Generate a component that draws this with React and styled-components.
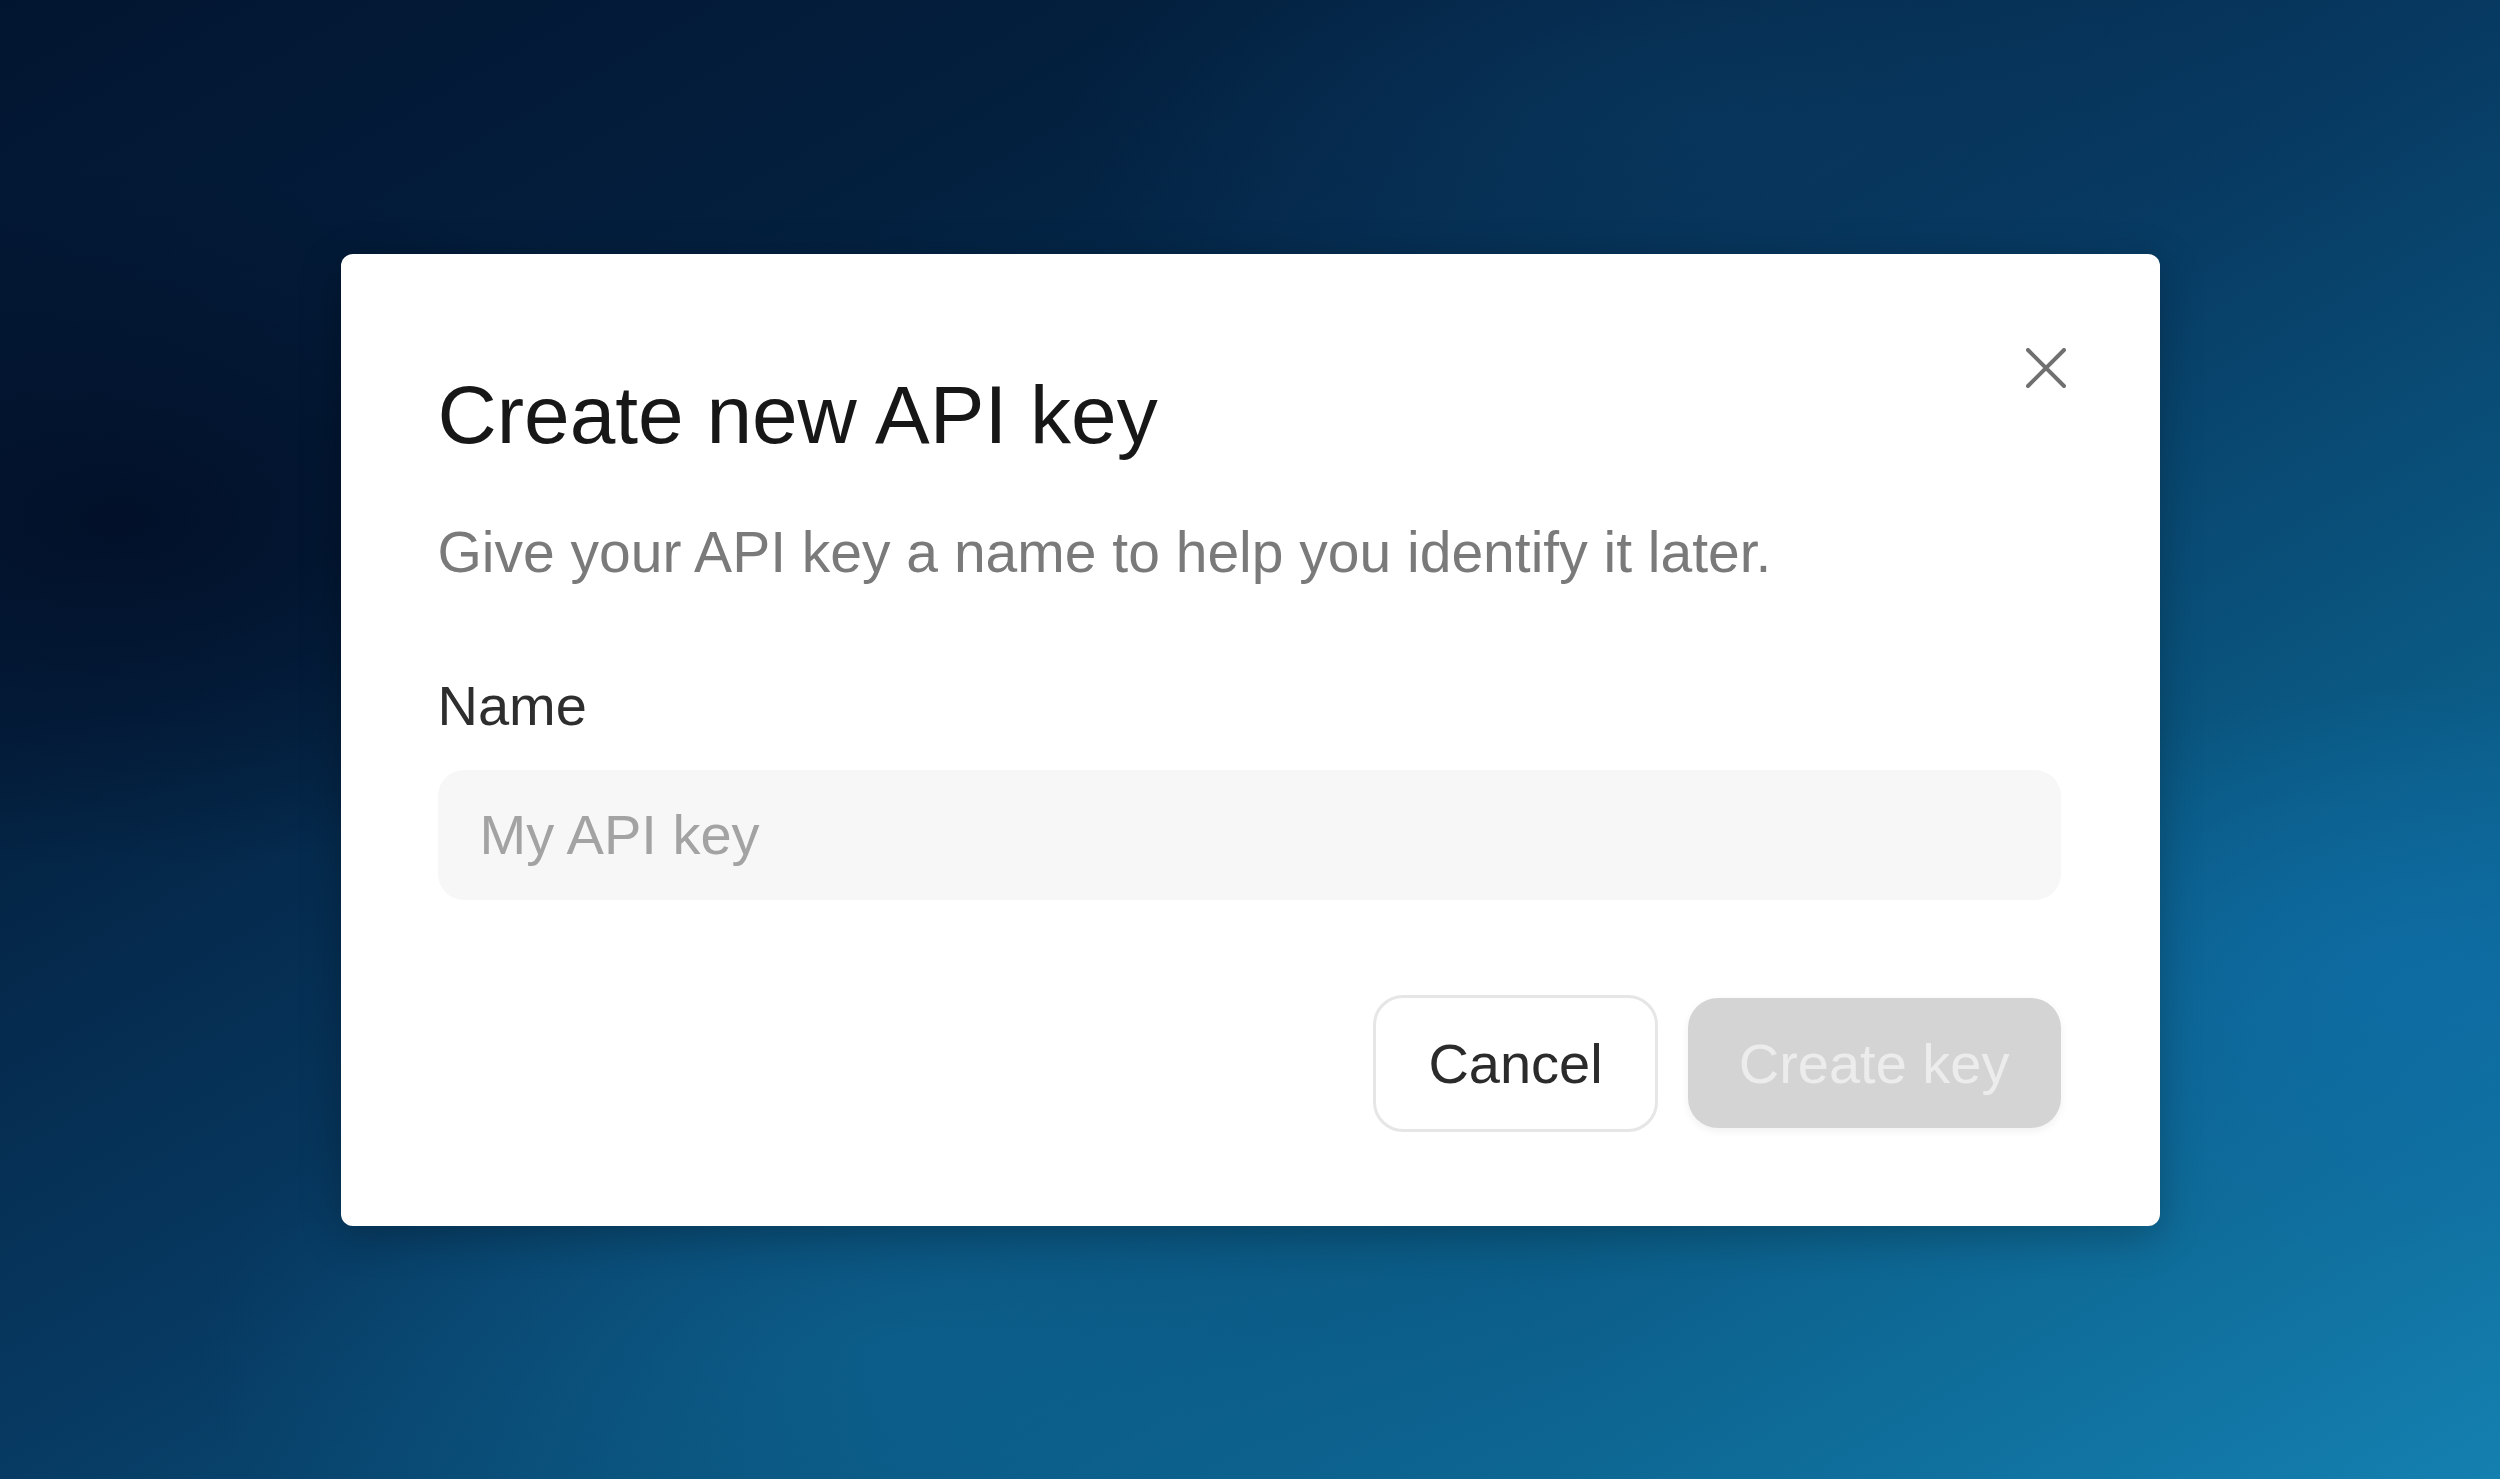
import React from "react";
import styled, { createGlobalStyle } from "styled-components";

const GlobalStyle = createGlobalStyle`
  html, body {
    margin: 0;
    padding: 0;
  }
  body {
    font-family: "Liberation Sans", Arial, sans-serif;
  }
  * {
    box-sizing: border-box;
  }
`;

const Backdrop = styled.div`
  width: 100%;
  height: 1479px;
  display: flex;
  align-items: center;
  justify-content: center;
  background:
    radial-gradient(ellipse 900px 500px at 120px 520px, rgba(2, 14, 38, 0.85), rgba(2, 14, 38, 0) 70%),
    radial-gradient(ellipse 700px 420px at 2420px 980px, rgba(14, 110, 170, 0.7), rgba(14, 110, 170, 0) 70%),
    radial-gradient(ellipse 1000px 500px at 900px 1350px, rgba(16, 112, 160, 0.45), rgba(16, 112, 160, 0) 70%),
    radial-gradient(ellipse 900px 400px at 1700px 120px, rgba(10, 60, 100, 0.5), rgba(10, 60, 100, 0) 70%),
    linear-gradient(150deg, #021530 0%, #03203f 25%, #073a62 50%, #0a5a84 72%, #1480b0 100%);
`;

const Modal = styled.div`
  position: relative;
  width: 1819px;
  background: #ffffff;
  border-radius: 12px;
  padding: 112px 99px 94px 97px;
  display: flex;
  flex-direction: column;
  box-shadow: 0 10px 40px rgba(0, 0, 0, 0.25);
`;

// sits over the top-right corner of the modal
const CloseButton = styled.button`
  position: absolute;
  top: 92px;
  right: 92px;
  width: 44px;
  height: 44px;
  padding: 0;
  border: none;
  background: transparent;
  display: flex;
  align-items: center;
  justify-content: center;
  cursor: pointer;
`;

const Title = styled.h2`
  margin: 0;
  font-size: 82px;
  line-height: 98px;
  font-weight: 400;
  color: #171717;
`;

const Subtitle = styled.p`
  margin: 54px 0 0;
  font-size: 57px;
  line-height: 68px;
  color: #7a7a7a;
`;

const Label = styled.label`
  margin-top: 86px;
  font-size: 56px;
  line-height: 68px;
  color: #2e2e2e;
`;

const Input = styled.input`
  margin-top: 30px;
  height: 130px;
  width: 100%;
  border: none;
  outline: none;
  border-radius: 26px;
  background: #f7f7f7;
  padding: 0 42px;
  font-family: "Liberation Sans", Arial, sans-serif;
  font-size: 56px;
  color: #222;
  &::placeholder {
    color: #a3a3a3;
  }
`;

const Actions = styled.div`
  margin-top: 95px;
  display: flex;
  justify-content: flex-end;
  align-items: center;
  gap: 30px;
`;

const Button = styled.button`
  font-family: "Liberation Sans", Arial, sans-serif;
  font-size: 56px;
  border-radius: 30px;
  cursor: pointer;
  display: flex;
  align-items: center;
  justify-content: center;
  height: ${(p) => (p.$primary ? "130px" : "137px")};
  padding: ${(p) => (p.$primary ? "0 51px" : "0 52px")};
  border: ${(p) => (p.$primary ? "none" : "3px solid #e6e6e6")};
  background: ${(p) => (p.$primary ? "#d4d4d4" : "#ffffff")};
  color: ${(p) => (p.$primary ? "#ececec" : "#2b2b2b")};
  box-shadow: ${(p) => (p.$primary ? "0 3px 8px rgba(0,0,0,0.06)" : "none")};
`;

const CloseIcon = () => (
  <svg width="40" height="40" viewBox="0 0 40 40" fill="none">
    <path
      d="M2 2 L38 38 M38 2 L2 38"
      stroke="#707070"
      strokeWidth="4"
      strokeLinecap="round"
    />
  </svg>
);

const App = () => {
  return (
    <>
      <GlobalStyle />
      <Backdrop>
        <Modal>
          <CloseButton aria-label="Close">
            <CloseIcon />
          </CloseButton>
          <Title>Create new API key</Title>
          <Subtitle>Give your API key a name to help you identify it later.</Subtitle>
          <Label htmlFor="key-name">Name</Label>
          <Input id="key-name" placeholder="My API key" />
          <Actions>
            <Button>Cancel</Button>
            <Button $primary disabled>
              Create key
            </Button>
          </Actions>
        </Modal>
      </Backdrop>
    </>
  );
};

export default App;
